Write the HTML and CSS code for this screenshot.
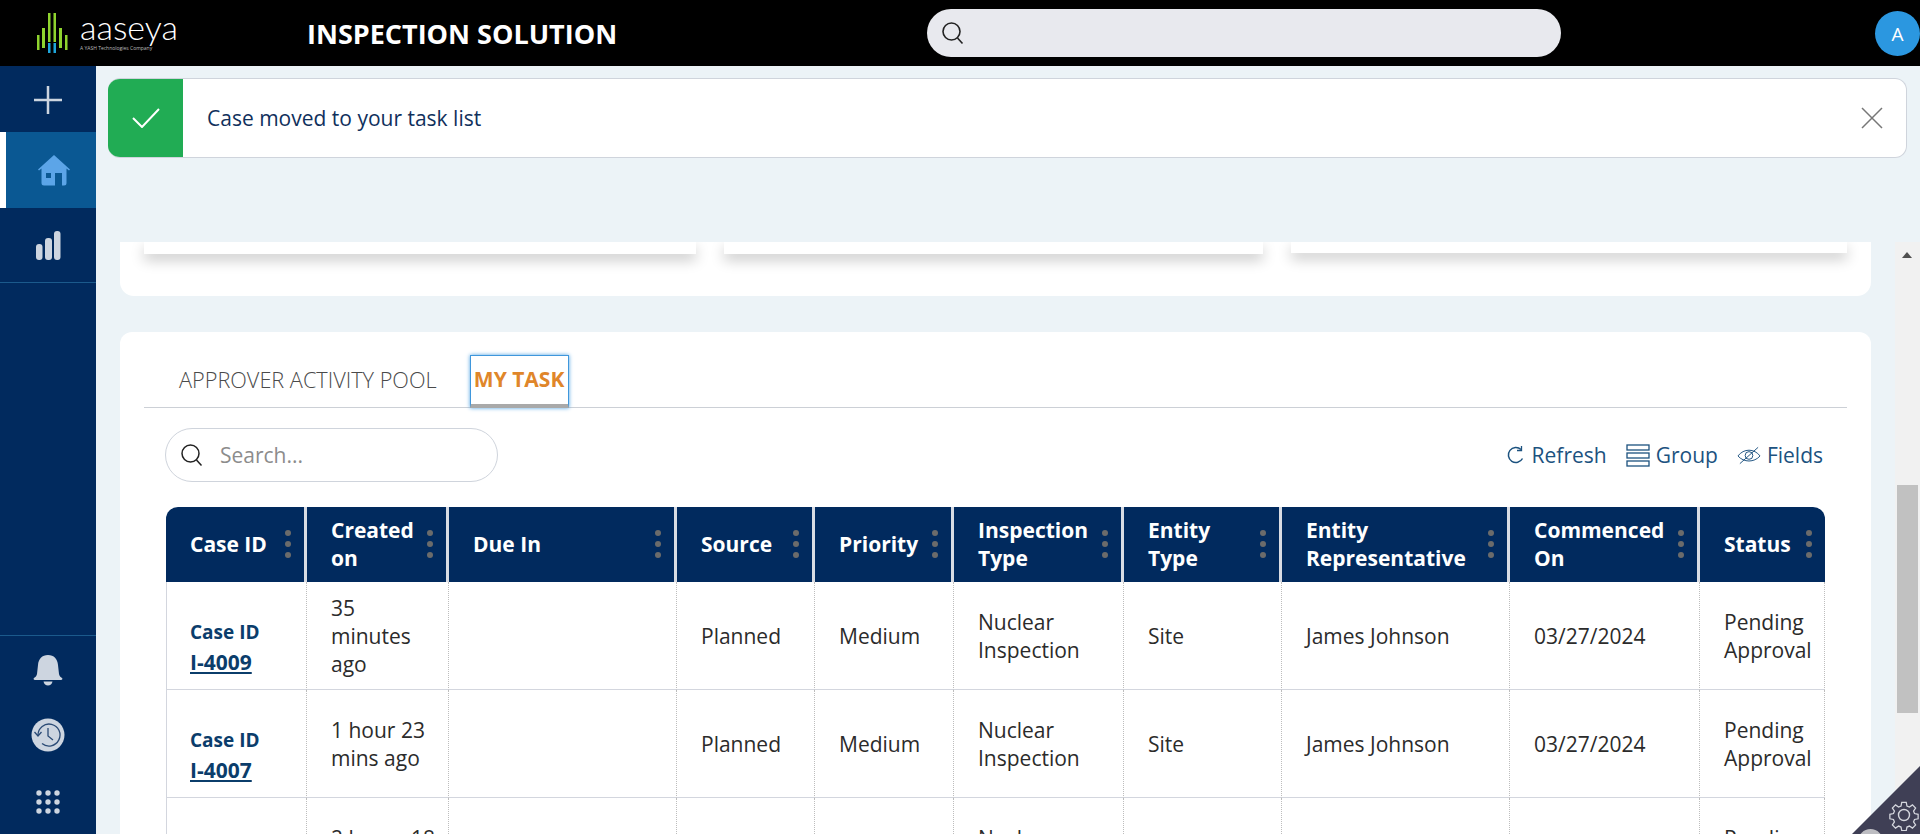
FILE: index.html
```html
<!DOCTYPE html>
<html lang="en">
<head>
  <meta charset="UTF-8">
  <title>Inspection Solution</title>
  <link rel="stylesheet" href="styles.css">
</head>
<body>

  <!-- Top bar -->
  <header class="topbar">
    <div class="logo">
      <svg class="logo-mark" width="31" height="40" viewBox="0 0 31 40">
        <rect x="0" y="22" width="2.500" height="15" fill="#8fd42e"/>
        <rect x="5" y="15" width="3" height="20" fill="#8fd42e"/>
        <rect x="11" y="0" width="2.500" height="29" fill="#8fd42e"/>
        <rect x="16.500" y="0" width="2.500" height="29" fill="#8fd42e"/>
        <rect x="22" y="15" width="3" height="20" fill="#8fd42e"/>
        <rect x="28" y="22" width="2.500" height="15" fill="#8fd42e"/>
        <rect x="11" y="30" width="2.500" height="10" fill="#1ea7dc"/>
        <rect x="16.500" y="30" width="2.500" height="10" fill="#1ea7dc"/>
      </svg>
      <div class="logo-text">
        <span class="logo-name">aaseya</span>
        <span class="logo-sub">A YASH Technologies Company</span>
      </div>
    </div>
    <div class="app-title">INSPECTION SOLUTION</div>
    <div class="global-search">
      <svg width="24" height="24" viewBox="0 0 24 24" fill="none" stroke="#222" stroke-width="1.600">
        <circle cx="10.500" cy="10.500" r="8.500"/>
        <path d="M16.500 17l5 5.500"/>
      </svg>
    </div>
    <div class="avatar">A</div>
  </header>

  <div class="layout">
    <!-- Side nav -->
    <nav class="sidenav">
      <div class="nav-item first">
        <svg width="28" height="28" viewBox="0 0 28 28" stroke="#cdd5e0" stroke-width="2.500"><path d="M14 0v28M0 14h28"/></svg>
      </div>
      <div class="nav-item active">
        <svg width="32" height="31" viewBox="0 0 32 31" fill="#5ca5e8">
          <path d="M16 0L0 14.500l1 1L3.500 13.500V28a2.500 2.500 0 0 0 2.500 2.500H17V18h7v12.500h2a2.500 2.500 0 0 0 2.500-2.500V13.500L31 15.500l1-1z"/>
          <rect x="8" y="18" width="5" height="5" fill="#0a5893"/>
        </svg>
      </div>
      <div class="nav-item last">
        <svg width="25" height="29" viewBox="0 0 25 29" fill="#cdd5e0">
          <rect x="0" y="13" width="6.500" height="16" rx="3"/>
          <rect x="9" y="7" width="7" height="22" rx="3"/>
          <rect x="18" y="0" width="6.500" height="29" rx="3"/>
        </svg>
      </div>
      <div class="nav-bottom">
        <svg width="30" height="32" viewBox="0 0 30 32" fill="#cdd5e0">
          <path d="M15 1c6 0 9.500 4 10 10l1 9c.3 2 1.600 3 3 4 .8.700.4 2-1 2H2c-1.400 0-1.800-1.300-1-2 1.400-1 2.700-2 3-4l1-9C5.500 5 9 1 15 1z"/>
          <path d="M10.500 27.500h9c-.5 2.500-2.300 4-4.500 4s-4-1.500-4.500-4z"/>
        </svg>
        <svg width="34" height="34" viewBox="0 0 34 34" fill="none">
          <circle cx="17" cy="17" r="16.500" fill="#cdd5e0"/>
          <path d="M7 17a11 11 0 1 1 4 8.500" stroke="#2a4a75" stroke-width="1.300"/>
          <path d="M3.500 14l3.500 4 3.500-4M17 10v8l5 4" stroke="#2a4a75" stroke-width="1.300"/>
        </svg>
        <svg class="apps" width="24" height="24" viewBox="0 0 24 24" fill="#cdd5e0">
          <circle cx="3" cy="3" r="2.700"/><circle cx="12" cy="3" r="2.700"/><circle cx="21" cy="3" r="2.700"/>
          <circle cx="3" cy="12" r="2.700"/><circle cx="12" cy="12" r="2.700"/><circle cx="21" cy="12" r="2.700"/>
          <circle cx="3" cy="21" r="2.700"/><circle cx="12" cy="21" r="2.700"/><circle cx="21" cy="21" r="2.700"/>
        </svg>
      </div>
    </nav>

    <main class="main">
      <div class="toast">
        <div class="toast-icon">
          <svg width="28" height="20" viewBox="0 0 28 20" fill="none" stroke="#fff" stroke-width="2"><path d="M1 10l9 9L27 1"/></svg>
        </div>
        <div class="toast-msg">Case moved to your task list</div>
        <svg class="toast-close" width="22" height="22" viewBox="0 0 22 22" stroke="#777" stroke-width="1.500"><path d="M1 1l20 20M21 1L1 21"/></svg>
      </div>

      <div class="scroll-wrap">
        <div class="scroll-content">
          <section class="panel stats">
            <div class="stat-card"></div>
            <div class="stat-card"></div>
            <div class="stat-card short"></div>
          </section>

          <section class="panel tasks">
            <div class="tabs">
              <div class="tab">APPROVER ACTIVITY POOL</div>
              <div class="tab selected">MY TASK</div>
            </div>

            <div class="tools">
              <div class="search-box">
                <svg width="24" height="24" viewBox="0 0 24 24" fill="none" stroke="#222" stroke-width="1.500">
                  <circle cx="10.500" cy="10.500" r="8.500"/>
                  <path d="M16.500 17l5 5.500"/>
                </svg>
                <span>Search...</span>
              </div>
              <div class="actions">
                <div class="action">
                  <svg width="20" height="20" viewBox="0 0 20 20" fill="none" stroke="#1c527f" stroke-width="1.500">
                    <path d="M16.500 13.500A7.500 7.500 0 1 1 15 4.500"/>
                    <path d="M15.500 1v4.500H11" stroke-width="1.300"/>
                  </svg>
                  Refresh
                </div>
                <div class="action">
                  <svg width="24" height="23" viewBox="0 0 24 23" fill="none" stroke="#1c527f" stroke-width="1.300">
                    <rect x="1" y="1" width="22" height="5"/>
                    <rect x="1" y="9" width="22" height="5"/>
                    <rect x="1" y="17" width="22" height="5"/>
                  </svg>
                  Group
                </div>
                <div class="action">
                  <svg width="24" height="20" viewBox="0 0 25 20" fill="none" stroke="#1c527f" stroke-width="1">
                    <path d="M1 11c6-8 17-8 23 0-6 7-17 7-23 0z"/>
                    <circle cx="12.500" cy="10.500" r="4"/>
                    <path d="M3 19L22 2"/>
                  </svg>
                  Fields
                </div>
              </div>
            </div>

            <table class="grid">
              <colgroup>
                <col class="c1"><col class="c2"><col class="c3"><col class="c4"><col class="c5">
                <col class="c6"><col class="c7"><col class="c8"><col class="c9"><col class="c10">
              </colgroup>
              <thead>
                <tr>
                  <th><div class="th-in"><span>Case ID</span><i class="kebab"></i></div></th>
                  <th><div class="th-in"><span>Created on</span><i class="kebab"></i></div></th>
                  <th><div class="th-in"><span>Due In</span><i class="kebab"></i></div></th>
                  <th><div class="th-in"><span>Source</span><i class="kebab"></i></div></th>
                  <th><div class="th-in"><span>Priority</span><i class="kebab"></i></div></th>
                  <th><div class="th-in"><span>Inspection Type</span><i class="kebab"></i></div></th>
                  <th><div class="th-in"><span>Entity Type</span><i class="kebab"></i></div></th>
                  <th><div class="th-in"><span>Entity Representative</span><i class="kebab"></i></div></th>
                  <th><div class="th-in"><span>Commenced On</span><i class="kebab"></i></div></th>
                  <th><div class="th-in"><span>Status</span><i class="kebab"></i></div></th>
                </tr>
              </thead>
              <tbody>
                <tr>
                  <td class="case"><div>Case ID</div><a>I-4009</a></td>
                  <td>35 minutes ago</td><td></td><td>Planned</td><td>Medium</td>
                  <td>Nuclear Inspection</td><td>Site</td><td>James Johnson</td><td>03/27/2024</td><td>Pending Approval</td>
                </tr>
                <tr>
                  <td class="case"><div>Case ID</div><a>I-4007</a></td>
                  <td>1 hour 23 mins ago</td><td></td><td>Planned</td><td>Medium</td>
                  <td>Nuclear Inspection</td><td>Site</td><td>James Johnson</td><td>03/27/2024</td><td>Pending Approval</td>
                </tr>
                <tr>
                  <td class="case"><div>Case ID</div><a>I-4005</a></td>
                  <td>2 hours 18 mins ago</td><td></td><td>Planned</td><td>Medium</td>
                  <td>Nuclear Inspection</td><td>Site</td><td>James Johnson</td><td>03/27/2024</td><td>Pending Approval</td>
                </tr>
              </tbody>
            </table>
          </section>
        </div>
        <div class="scrollbar">
          <span class="arrow"></span>
          <div class="thumb"></div>
        </div>
      </div>
    </main>
  </div>

  <!-- Settings corner -->
  <div class="settings-corner">
    <span class="corner-dot"></span>
    <svg width="32" height="32" viewBox="0 0 32 32" fill="none" stroke="#d5d7de" stroke-width="1.400">
      <circle cx="16" cy="16" r="5.500"/>
      <path d="M13.500 2h5l.8 4 2.700 1.100 3.400-2.300 3.500 3.500-2.300 3.400 1.100 2.700 4 .8v5l-4 .8-1.100 2.700 2.300 3.400-3.500 3.500-3.400-2.300-2.700 1.100-.8 4h-5l-.8-4-2.700-1.100-3.400 2.300-3.500-3.500 2.300-3.400-1.100-2.700-4-.8v-5l4-.8 1.100-2.700-2.300-3.400 3.500-3.500 3.400 2.300 2.700-1.100z" transform="translate(1.600 1.600) scale(.9)"/>
    </svg>
  </div>

</body>
</html>
```

FILE: styles.css
```css
* { box-sizing: border-box; }
html, body { height: 100%; }
body {
  margin: 0;
  overflow: hidden;
  font-family: "Open Sans", sans-serif;
  font-size: 21px;
  color: #2b2b2b;
  background-color: #ecf3f7;
}

/* top bar */
.topbar {
  height: 66px;
  background-color: #000;
  display: flex;
  align-items: center;
  position: relative;
}
.logo {
  display: flex;
  align-items: flex-start;
  gap: 12px;
  margin-left: 37px;
  width: 270px;
}
.logo-text { display: flex; flex-direction: column; margin-top: -5px; }
.logo-name {
  font-family: "Lato", sans-serif;
  font-weight: 300;
  font-size: 34px;
  line-height: 38px;
  color: #fff;
}
.logo-sub {
  font-size: 5px;
  line-height: 5px;
  color: #bbb;
  white-space: nowrap;
}
.app-title {
  font-weight: 700;
  font-size: 27px;
  color: #fff;
  width: 620px;
}
.global-search {
  width: 634px;
  height: 48px;
  border-radius: 24px;
  background-color: #e8e9ee;
  display: flex;
  align-items: center;
  padding-left: 14px;
}
.avatar {
  position: absolute;
  left: 1875px;
  top: 11px;
  width: 45px;
  height: 45px;
  border-radius: 50%;
  background-color: #2b97e0;
  color: #fff;
  font-size: 19px;
  display: flex;
  align-items: center;
  justify-content: center;
}

.layout { display: flex; height: calc(100% - 66px); }

/* side nav */
.sidenav {
  width: 96px;
  background-color: #012a5e;
  display: flex;
  flex-direction: column;
}
.nav-item {
  height: 66px;
  display: flex;
  align-items: center;
  justify-content: center;
}
.nav-item.first { padding-top: 2px; }
.nav-item.active {
  height: 76px;
  background-color: #0a5893;
  border-left: 6px solid #fff;
  padding-left: 6px;
}
.nav-item.last { height: 75px; border-bottom: 1px solid #1b5a8c; }
.nav-bottom {
  margin-top: auto;
  height: 199px;
  border-top: 1px solid #1b5a8c;
  display: flex;
  flex-direction: column;
  align-items: center;
  gap: 32px;
  padding-top: 18px;
}
.apps { margin-top: 6px; }

/* main */
.main { flex: 1; min-width: 0; display: flex; flex-direction: column; }
.toast {
  height: 80px;
  margin: 12px 13px 0 12px;
  background-color: #fff;
  border: 1px solid #cfd4dc;
  border-left: 0;
  border-radius: 12px;
  display: flex;
  align-items: center;
  overflow: hidden;
  flex-shrink: 0;
}
.toast-icon {
  width: 75px;
  height: 100%;
  background-color: #21ac54;
  display: flex;
  align-items: center;
  justify-content: center;
}
.toast-msg { margin-left: 24px; font-size: 21px; color: #10305c; flex: 1; }
.toast-close { margin-right: 23px; }

.scroll-wrap {
  flex: 1;
  min-height: 0;
  margin-top: 84px;
  display: flex;
  overflow: hidden;
}
.scroll-content { flex: 1; min-width: 0; padding: 0 24px; }
.panel { background-color: #fff; border-radius: 12px; }

.stats {
  height: 54px;
  padding: 0 24px;
  display: flex;
  border-radius: 0 0 14px 14px;
}
.stat-card {
  height: 12px;
  width: 552px;
  background-color: #fff;
  box-shadow: 0 6px 14px rgba(0,0,0,0.22);
}
.stat-card + .stat-card { margin-left: 28px; }
.stat-card:nth-child(2) { width: 539px; }
.stat-card.short { height: 11px; width: 556px; }

.tasks { margin-top: 36px; padding: 23px 24px 0; }

.tabs {
  display: flex;
  height: 53px;
  border-bottom: 1px solid #ccd0d6;
  padding-left: 35px;
  align-items: stretch;
}
.tab {
  font-size: 21.700px;
  font-weight: 300;
  color: #4a4a4a;
  display: flex;
  align-items: center;
  padding-bottom: 4px;
}
.tab.selected {
  margin-left: 33px;
  width: 99px;
  height: 53px;
  justify-content: center;
  font-size: 21px;
  font-weight: 700;
  color: #e0862a;
  border: 1px solid #3f97dc;
  box-shadow: 0 0 4px #4a9fe2;
  border-bottom: 4px solid #a9a9a9;
  padding-bottom: 2px;
}

.tools {
  display: flex;
  align-items: center;
  justify-content: space-between;
  margin: 20px 0 25px 21px;
  padding-right: 24px;
}
.search-box {
  width: 333px;
  height: 54px;
  border: 1px solid #cfd4dc;
  border-radius: 27px;
  display: flex;
  align-items: center;
  gap: 16px;
  padding-left: 14px;
  padding-bottom: 1px;
  color: #8c8c8c;
  font-size: 21px;
}
.actions { display: flex; gap: 19px; }
.action {
  display: flex;
  align-items: center;
  gap: 6px;
  color: #1c527f;
  font-size: 21px;
}

/* table */
.grid {
  table-layout: fixed;
  width: 1659px;
  margin-left: 22px;
  border-collapse: separate;
  border-spacing: 0;
}
.c1 { width: 141px; }
.c2 { width: 142px; }
.c3 { width: 228px; }
.c4 { width: 138px; }
.c5 { width: 139px; }
.c6 { width: 170px; }
.c7 { width: 158px; }
.c8 { width: 228px; }
.c9 { width: 190px; }
.c10 { width: 125px; }

.grid th {
  height: 75px;
  padding: 0 0 1px 24px;
  background-color: #012a5e;
  color: #fff;
  font-size: 21px;
  line-height: 28px;
  font-weight: 700;
  text-align: left;
  border-right: 3px solid #d9dce3;
}
.grid th:first-child { border-top-left-radius: 12px; }
.grid th:last-child { border-top-right-radius: 12px; border-right: 0; }
.th-in { display: flex; align-items: center; justify-content: space-between; gap: 8px; padding-right: 13px; }
.kebab {
  flex: none;
  width: 6px;
  height: 6px;
  border-radius: 50%;
  background-color: #6b6b6b;
  box-shadow: 0 -11px 0 #6b6b6b, 0 11px 0 #6b6b6b;
}
.grid td {
  height: 108px;
  padding: 11px 11px 11px 24px;
  font-size: 21px;
  line-height: 28px;
  border-right: 1px dotted #bdbdbd;
  border-bottom: 1px solid #d3d6de;
}
.grid td:first-child { border-left: 1px solid #d3d6de; }
.grid td.case {
  padding: 33px 8px 10px 23px;
  color: #0b3d6b;
  font-weight: 700;
  font-size: 19px;
  line-height: 30px;
}
.case a { text-decoration: underline; font-size: 21px; }

/* fake scrollbar */
.scrollbar {
  width: 25px;
  background-color: #f1f1f1;
  position: relative;
  flex: none;
}
.arrow {
  position: absolute;
  left: 7px;
  top: 10px;
  border-left: 5px solid transparent;
  border-right: 5px solid transparent;
  border-bottom: 6px solid #505050;
}
.thumb {
  position: absolute;
  left: 2px;
  top: 243px;
  width: 21px;
  height: 228px;
  background-color: #c1c1c1;
}

.settings-corner {
  position: absolute;
  right: 0;
  bottom: 0;
  width: 68px;
  height: 68px;
  background-color: #3f3f55;
  clip-path: polygon(100% 0, 100% 100%, 0 100%);
}
.settings-corner svg { position: absolute; right: 0; bottom: 3px; }
.corner-dot {
  position: absolute;
  left: 6px;
  top: 63px;
  width: 25px;
  height: 25px;
  border-radius: 50%;
  background-color: #bdbdc2;
}
```
